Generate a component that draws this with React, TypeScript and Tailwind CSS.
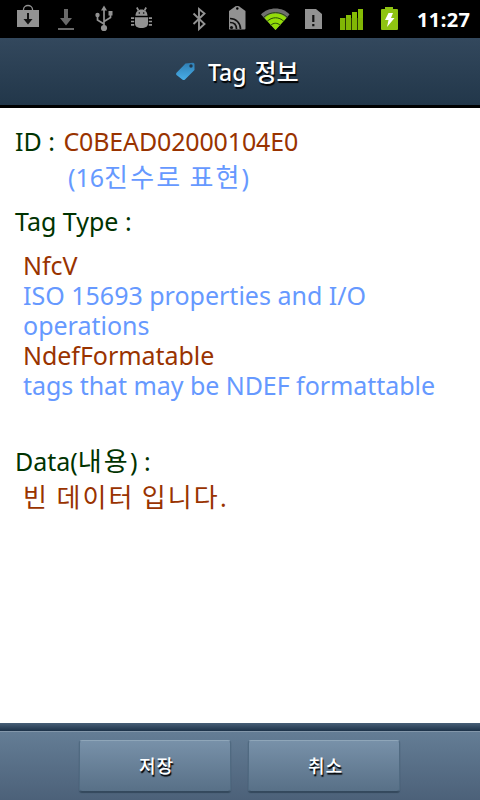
import React from 'react'

interface SlotProps {
  children: React.ReactNode;
}

interface LineProps {
  className?: string;
  children: React.ReactNode;
}

const Slot: React.FC<SlotProps> = ({ children }) => (
  <svg width="38" height="38" viewBox="0 0 38 38" fill="#929292" className="shrink-0">
    {children}
  </svg>
)

const Line: React.FC<LineProps> = ({ className = '', children }) => (
  <p className={`h-[30px] whitespace-pre leading-[30px] ${className}`}>{children}</p>
)

// hangul is set a little wider than the latin text around it
const Ko: React.FC<LineProps> = ({ children }) => (
  <span className="text-[26px] leading-[0] tracking-[2.1px] [word-spacing:-1.500px]">{children}</span>
)

const StatusBar = () => (
  <div className="flex h-[38px] bg-black pl-[9px]">
    <Slot>
      <path d="M14.500 10.500V9.500a4.500 4 0 0 1 9 0v1" fill="none" stroke="#929292" strokeWidth="1.300" />
      <path d="M8 10h22v17H8z" />
      <path d="M18 13h2v6h3.500L19 24.500l-4.500-5.500H18z" fill="#111" />
    </Slot>
    <Slot>
      <path d="M17 9h4v9h4l-6 7.500-6-7.500h4zM11 28h16v2H11z" fill="#6a6a6a" />
    </Slot>
    <Slot>
      <path d="M19 8v19M19 24l-6.500-4v-4.500M19 21.500l6.500-4V13" fill="none" stroke="#929292" strokeWidth="1.700" />
      <path d="M19 5.500l3 5h-6z" />
      <circle cx="19" cy="28" r="3.100" />
      <circle cx="12.500" cy="15" r="2.200" />
      <path d="M23.500 11h4v4.500h-4z" />
    </Slot>
    <Slot>
      <path d="M12.500 15.800c0-4 2.500-6.300 6-6.300s6 2.300 6 6.300zM12 17.200h13v6.300c0 3-2.500 4.500-6.500 4.500s-6.500-1.500-6.500-4.500z" />
      <path d="M15.500 10.500l-1.700-3M21.500 10.500l1.700-3M8 18.200h3.200M8 21.500h3.200M8 24.800h3.200M25.800 18.200H29M25.800 21.500H29M25.800 24.800H29" fill="none" stroke="#929292" strokeWidth="1.700" />
      <circle cx="16.300" cy="13" r=".8" fill="#000" />
      <circle cx="20.700" cy="13" r=".8" fill="#000" />
    </Slot>
    <div className="w-[19px] shrink-0" />
    <Slot>
      <path d="M13.500 13.500l11 10.500-5.500 5V9l5.500 4.500-11 10.500" fill="none" stroke="#929292" strokeWidth="1.900" />
    </Slot>
    <Slot>
      <path d="M11 29V11l5.500-4Q17 6 19.300 6T22 7l5.500 4v17.500q0 1-1 1H12q-1 0-1-.5z" />
      <circle cx="19.300" cy="8.500" r="1.200" fill="#000" />
      <path d="M12 18.500c6 0 10.500 4.500 10.500 10.500M12 22.500c4 0 6.500 2.500 6.500 6.500" fill="none" stroke="#111" strokeWidth="1.700" />
      <circle cx="13.500" cy="27.500" r="1.600" fill="#111" />
    </Slot>
    <Slot>
      <path d="M5 14.500C12 6.500 27 6.500 33.500 14.500L19.500 30z" fill="#6f6f6f" />
      <path d="M8.500 18C14 11.500 25 11.500 30.500 18L19.500 30z" fill="#93dc08" />
      <path d="M7.500 17.500C14 11 25 11 31.500 17.500M11 21.500c5-5 12-5 17 0M14.500 25.500c3-3 7-3 10 0" fill="none" stroke="#27480a" strokeWidth="1" />
    </Slot>
    <Slot>
      <path d="M11 9h11l6 5v15H11z" />
      <path d="M18.200 15h2.200v7h-2.200zM18.200 24h2.200v2.200h-2.200z" fill="#111" />
    </Slot>
    <Slot>
      <path d="M8 18h5v12H8zM14 15h5v15h-5zM20 12h5v18h-5zM26 9h5v21h-5z" fill="#86bd05" />
      <path d="M8 18h23v12H8z" fill="#78aa05" opacity=".35" />
    </Slot>
    <Slot>
      <path d="M15 7h8v2h4q1 0 1 1v19q0 1-1 1H12q-1 0-1-1V10q0-1 1-1h3z" fill="#8fc412" />
      <path d="M18.500 13H23l-2 5h3.500L17 27l1.500-7H15z" fill="#fff" />
    </Slot>
    <span className="ml-[9px] text-[20px] font-bold leading-[39px] tracking-[0.4px] text-white">11:27</span>
  </div>
)

const Header = () => (
  <div className="flex h-[70px] items-center border-b-3 border-black bg-linear-to-b from-[#33485d] to-[#22374a] pl-[175px]">
    <svg width="20" height="19" viewBox="0 0 20 19">
      <defs>
        <linearGradient id="tag" x1="0" y1="0" x2="0" y2="1">
          <stop offset="0" stopColor="#2f7fb5" />
          <stop offset="1" stopColor="#48aee8" />
        </linearGradient>
      </defs>
      <path d="M10.500 1.500L18 .8q1.500 0 1.500 1.500V8L10 17.500q-1.200 1.200-2.700 0L1.500 13q-1-1 0-2.300z" fill="url(#tag)" />
      <circle cx="16" cy="4" r="1.700" fill="#20384c" />
    </svg>
    <h1 className="ml-[13px] whitespace-nowrap text-[23px] font-medium leading-[30px] text-white [text-shadow:1px_2px_1px_#000]">
      Tag <span className="ml-[2px] text-[24px] leading-[0]">정보</span>
    </h1>
  </div>
)

const Button: React.FC<LineProps> = ({ children }) => (
  <button
    type="button"
    className="h-[52px] w-[152px] rounded-[3px] border border-[#506a81] border-t-[#8fa6b9] border-b-[#34495d] bg-linear-to-b from-[#7891a9] to-[#587087] pl-[4px] text-[18px] font-medium tracking-[1px] text-white shadow-[0_1px_1px_#33485c] [text-shadow:1px_2px_1px_#000]"
  >
    {children}
  </button>
)

const App = () => {
  return (
    <div className="flex h-[800px] w-[480px] flex-col overflow-hidden bg-white font-['Noto_Sans','Noto_Sans_CJK_KR',sans-serif]">
      <StatusBar />
      <Header />
      <div className="flex-1 pl-[15px] pt-[18px] text-[25px] text-[#003300]">
        <Line>ID : <span className="ml-[2px] tracking-[-0.15px] text-[#993300]">C0BEAD02000104E0</span></Line>
        <Line className="mt-[6px] pl-[53px] text-[#6699ff]">(16<Ko>진수로 표현</Ko>)</Line>
        <Line className="mt-[14px]">Tag Type :</Line>
        <div className="mt-[14px] pl-[8px] text-[#6699ff]">
          <Line className="tracking-[-0.05px] text-[#993300]">NfcV</Line>
          <Line>ISO 15693 properties and I/O</Line>
          <Line>operations</Line>
          <Line className="tracking-[-0.05px] text-[#993300]">NdefFormatable</Line>
          <Line className="tracking-[-0.05px]">tags that may be NDEF formattable</Line>
        </div>
        <Line className="mt-[46px]">Data(<Ko>내용</Ko>) :</Line>
        <Line className="mt-[6px] pl-[8px] text-[#993300]"><Ko>빈 데이터 입니다</Ko>.</Line>
      </div>
      <div className="h-[8px] bg-linear-to-b from-[#486078] to-[#1c3248]" />
      <div className="flex h-[69px] justify-center gap-[17px] border-t border-[#8397aa] bg-linear-to-b from-[#647d95] to-[#4c6179] pr-[2px] pt-[8px]">
        <Button>저장</Button>
        <Button>취소</Button>
      </div>
    </div>
  )
}

export default App;
